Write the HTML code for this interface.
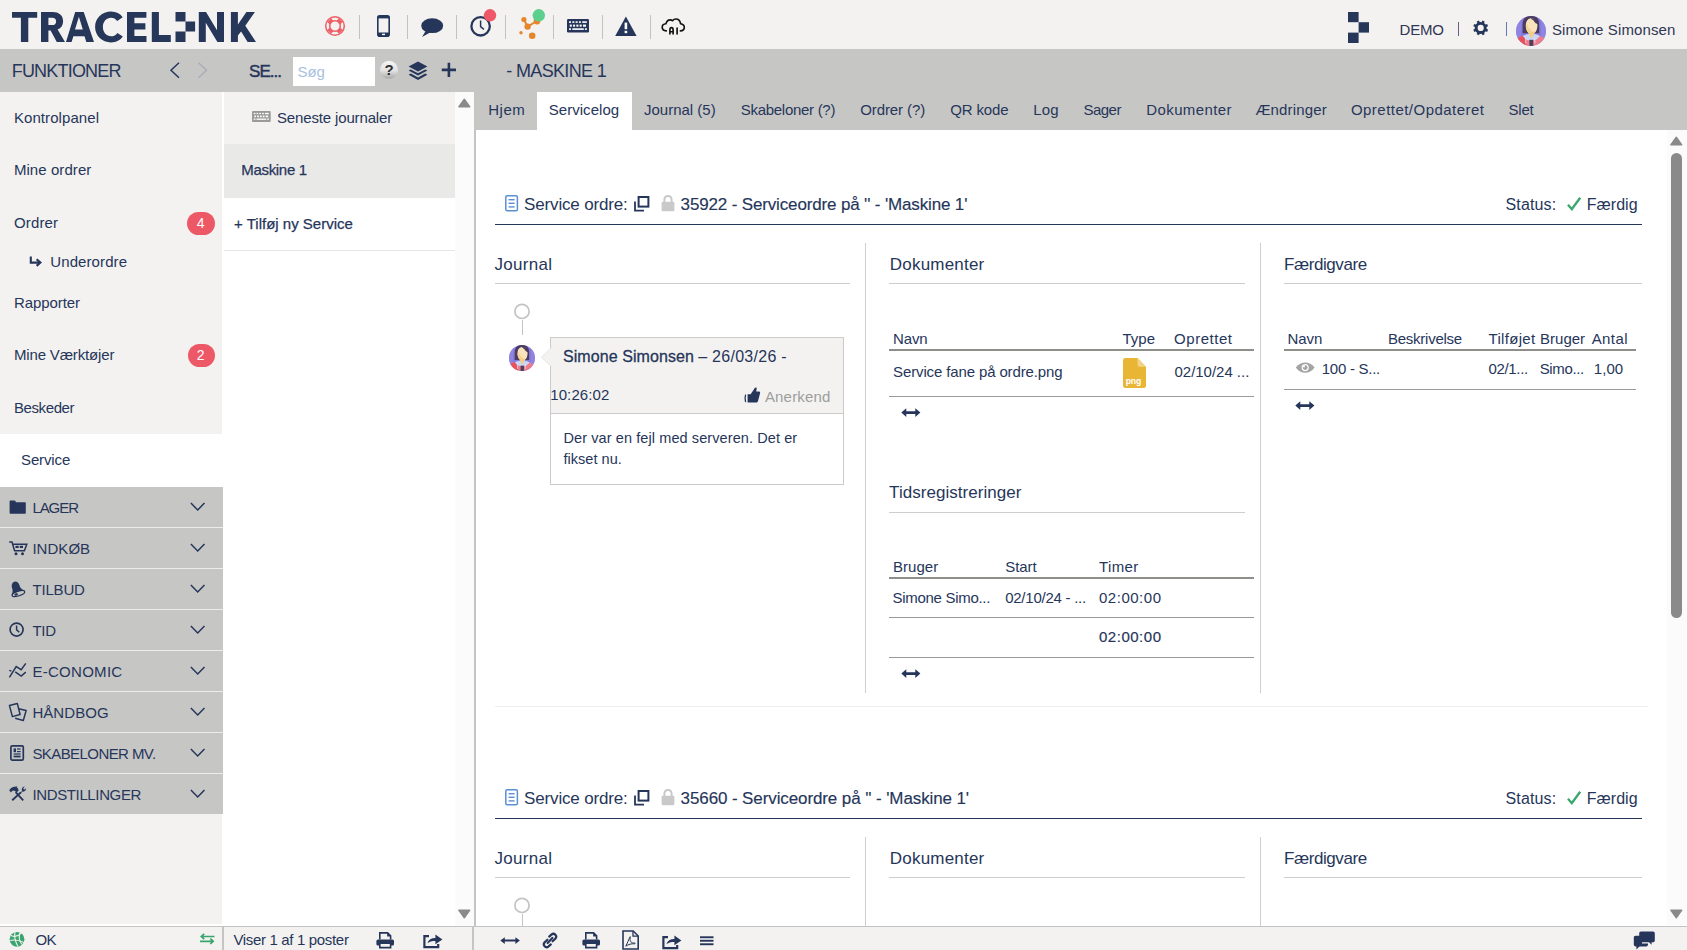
<!DOCTYPE html>
<html><head><meta charset="utf-8"><title>Tracelink - Service</title>
<style>
*{box-sizing:border-box;margin:0;padding:0}
html,body{width:1687px;height:950px;overflow:hidden;background:#fff}
body{font-family:"Liberation Sans",sans-serif;color:#26365a;position:relative}
.a{position:absolute}
.t{position:absolute;white-space:nowrap;font-family:"Liberation Sans",sans-serif;font-size:15px;line-height:15px;color:#26365a}
svg{position:absolute;overflow:visible}
</style></head><body>
<div class="a" style="left:0px;top:0px;width:1687px;height:49px;background:#f3f2f0"></div>
<div class="a" style="left:0px;top:49px;width:1687px;height:43px;background:#c6c6c5"></div>
<div class="a" style="left:0px;top:92px;width:222px;height:832px;background:#f3f2f0"></div>
<div class="a" style="left:0px;top:434px;width:222px;height:53px;background:#fff"></div>
<div class="a" style="left:222px;top:92px;width:2px;height:834px;background:#fff"></div>
<div class="a" style="left:224px;top:92px;width:231px;height:834px;background:#fff"></div>
<div class="a" style="left:224px;top:92px;width:231px;height:52px;background:#f3f2f0"></div>
<div class="a" style="left:224px;top:144px;width:231px;height:54px;background:#e9e9e8"></div>
<div class="a" style="left:224px;top:250px;width:231px;height:1px;background:#e6e6e6"></div>
<div class="a" style="left:455px;top:92px;width:19px;height:834px;background:#fbfbfb"></div>
<div class="a" style="left:474px;top:92px;width:1213px;height:38px;background:#c6c6c5"></div>
<div class="a" style="left:537px;top:92px;width:95px;height:38px;background:#fff"></div>
<div class="a" style="left:474px;top:130px;width:2px;height:796px;background:#c4c4c4"></div>
<div class="a" style="left:1667px;top:130px;width:19px;height:795px;background:#fbfbfb"></div>
<svg style="left:0px;top:0px;" width="260" height="49" viewBox="0 0 260 49"><g fill="#26375a">
<path d="M12 12h25.2v5.7h-8.9V42h-7.4V17.7H12z"/>
<path d="M41 12h11.5c6.7 0 10.6 3.4 10.6 9.2 0 4.1-2 7-5.5 8.4L65 42h-8.2l-6.2-11.4h-2.2V42H41zM48.4 17.7v7.4h3.8c2.5 0 3.9-1.3 3.9-3.7s-1.4-3.7-3.9-3.7z"/>
<path d="M75.2 12h8.5L94 42h-7.7l-1.8-5.8H73.4L71.6 42H66zM75 29.6h7.8l-3.9-12.8z"/>
<path d="M122.8 36.5c-2.5 3.7-6.6 5.9-11.7 5.9-9.1 0-16-6.6-16-15.4s6.9-15.4 16-15.4c5 0 9.1 2.1 11.6 5.6l-5.5 3.8c-1.5-2.1-3.6-3.3-6.1-3.3-4.6 0-8.2 3.8-8.2 9.3s3.6 9.3 8.2 9.3c2.7 0 4.8-1.2 6.3-3.4z"/>
<path d="M127 12h19.4v5.8h-12v5.4h11v6.3h-11v6.6h12.1V42H127z"/>
<path d="M151.8 12h7.1v23.1h11.9V42h-19z"/>
<path d="M175.5 12h10v9.6h9.6v10h-9.6V42h-10v-10.4h10V21.6h-10z"/>
<path d="M198.8 12h7.2l11 18.2V12h7V42h-6.6l-11.6-19.2V42h-7z"/>
<path d="M230.9 12h7v12.4l8.5-12.4h8.5l-9.6 13.7L256 42h-8.4l-6.5-10.4-3.2 3.9V42h-7z"/>
</g></svg>
<div class="a" style="left:359px;top:15px;width:1px;height:24px;background:#c2c2c2"></div>
<div class="a" style="left:407px;top:15px;width:1px;height:24px;background:#c2c2c2"></div>
<div class="a" style="left:456px;top:15px;width:1px;height:24px;background:#c2c2c2"></div>
<div class="a" style="left:505px;top:15px;width:1px;height:24px;background:#c2c2c2"></div>
<div class="a" style="left:553px;top:15px;width:1px;height:24px;background:#c2c2c2"></div>
<div class="a" style="left:602px;top:15px;width:1px;height:24px;background:#c2c2c2"></div>
<div class="a" style="left:650px;top:15px;width:1px;height:24px;background:#c2c2c2"></div>
<svg style="left:324px;top:15px;" width="22" height="22" viewBox="0 0 22 22"><circle cx="11" cy="11" r="9.3" fill="none" stroke="#ee5f67" stroke-width="1.5"/>
<circle cx="11" cy="11" r="5.3" fill="none" stroke="#ee5f67" stroke-width="1.5"/>
<g stroke="#ee5f67" stroke-width="5.2"><path d="M5.2 5.2l2.4 2.4M16.8 5.2l-2.4 2.4M5.2 16.8l2.4-2.4M16.8 16.8l-2.4-2.4"/></g></svg>
<svg style="left:377px;top:15px;" width="13" height="22" viewBox="0 0 13 22"><rect x="0.8" y="0.8" width="11.4" height="20.4" rx="2" fill="none" stroke="#26365a" stroke-width="1.6"/>
<rect x="0.8" y="0.8" width="11.4" height="2.6" fill="#26365a"/><rect x="0.8" y="17.6" width="11.4" height="3.6" rx="1" fill="#26365a"/>
<rect x="5" y="18.7" width="3" height="1.4" fill="#fff"/></svg>
<svg style="left:420px;top:18px;" width="24" height="20" viewBox="0 0 24 20"><ellipse cx="12.2" cy="7.7" rx="11" ry="7.4" fill="#26365a"/><path d="M6 12.5 L2 19 L11 14z" fill="#26365a"/></svg>
<svg style="left:469px;top:15px;" width="23" height="23" viewBox="0 0 23 23"><circle cx="11.6" cy="11.3" r="9.2" fill="none" stroke="#26365a" stroke-width="2.3"/><path d="M11.6 5.6v6.1l3.3 2.7" fill="none" stroke="#26365a" stroke-width="1.5"/></svg>
<svg style="left:483px;top:8px;" width="14" height="14" viewBox="0 0 14 14"><circle cx="7" cy="7.3" r="6.2" fill="#ee5866"/></svg>
<svg style="left:518px;top:8px;" width="28" height="30" viewBox="0 0 28 30"><g fill="#e6862c"><circle cx="5.9" cy="11.5" r="2.6"/><circle cx="9.6" cy="18.6" r="3.2"/><circle cx="3" cy="24.8" r="1.7"/><circle cx="14.2" cy="27.7" r="3.3"/><circle cx="19" cy="13" r="3.4"/></g>
<path d="M5.9 11.5 L9.6 18.6 L19 13" fill="none" stroke="#e6862c" stroke-width="2"/></svg>
<svg style="left:532px;top:8px;" width="14" height="14" viewBox="0 0 14 14"><circle cx="6.8" cy="7.3" r="6.2" fill="#5bcf8e"/></svg>
<svg style="left:567px;top:19px;" width="22" height="14" viewBox="0 0 22 14"><rect x="0" y="0" width="22" height="13.5" rx="1.2" fill="#26365a"/>
<g fill="#fff"><rect x="2" y="2.3" width="2" height="1.6"/><rect x="5.3" y="2.3" width="2" height="1.6"/><rect x="8.6" y="2.3" width="2" height="1.6"/><rect x="11.9" y="2.3" width="2" height="1.6"/><rect x="15.2" y="2.3" width="4.6" height="1.6"/>
<rect x="2.8" y="5.6" width="2" height="2.1"/><rect x="6.1" y="5.6" width="2" height="2.1"/><rect x="9.4" y="5.6" width="2" height="2.1"/><rect x="12.7" y="5.6" width="2" height="2.1"/><rect x="16" y="5.6" width="3" height="2.1"/>
<rect x="2" y="9.3" width="2" height="1.6"/><rect x="5.3" y="9.3" width="11.5" height="1.6"/><rect x="17.9" y="9.3" width="2" height="1.6"/></g></svg>
<svg style="left:615px;top:16px;" width="22" height="20" viewBox="0 0 22 20"><path d="M10.9 0.6 L21.6 19.9 H0.2z" fill="#26365a"/><rect x="9.6" y="6.6" width="2.6" height="6.6" fill="#fff"/><rect x="9.6" y="14.8" width="2.6" height="2.4" fill="#fff"/></svg>
<svg style="left:655px;top:12px;" width="35" height="28" viewBox="0 0 35 28"><g fill="none" stroke="#111" stroke-width="1.65" stroke-linecap="round" stroke-linejoin="round">
<path d="M11.3 18.9 C8.6 18.9 7.2 17 7.2 15.1 C7.2 13.3 8.7 11.9 10.9 11.7 C11.7 9.3 13.2 7.8 15.1 7.8 C16.1 7.8 16.9 8.1 17.5 8.7 C18.4 7.6 19.6 7 20.9 7 C23.2 7 25.1 8.9 25.6 11.7 C27.8 12.1 29.3 13.5 29.3 15.3 C29.3 17.4 27.6 18.9 25.4 18.9"/>
<path d="M14.9 21.9 V17.9 C14.9 16.4 15.6 15.6 16.5 15.6 C17.4 15.6 18.1 16.4 18.1 17.9 V21.9 M14.9 19.7 H18.1"/><path d="M22.1 16 V21.9"/></g></svg>
<svg style="left:1347px;top:11px;" width="23" height="33" viewBox="0 0 23 33"><g fill="#26375a"><rect x="1" y="1" width="10.6" height="10.2"/><rect x="11.6" y="11.2" width="10.4" height="10.4"/><rect x="1" y="21.6" width="10.6" height="10.4"/></g></svg>
<div class="t" style="left:1399.60px;top:22.00px;font-size:15px;line-height:15px;color:#2f3654;letter-spacing:-0.267px;">DEMO</div>
<div class="a" style="left:1458px;top:22px;width:1px;height:14px;background:#6a5f80"></div>
<svg style="left:1470px;top:17px;" width="22" height="22" viewBox="0 0 22 22"><g transform="translate(10.7,10.9)"><circle r="4.55" fill="none" stroke="#26365a" stroke-width="2.9"/>
<g fill="#26365a"><rect x="-1.25" y="-7.5" width="2.5" height="3" transform="rotate(22.5)"/><rect x="-1.25" y="-7.5" width="2.5" height="3" transform="rotate(67.5)"/><rect x="-1.25" y="-7.5" width="2.5" height="3" transform="rotate(112.5)"/><rect x="-1.25" y="-7.5" width="2.5" height="3" transform="rotate(157.5)"/><rect x="-1.25" y="-7.5" width="2.5" height="3" transform="rotate(202.5)"/><rect x="-1.25" y="-7.5" width="2.5" height="3" transform="rotate(247.5)"/><rect x="-1.25" y="-7.5" width="2.5" height="3" transform="rotate(292.5)"/><rect x="-1.25" y="-7.5" width="2.5" height="3" transform="rotate(337.5)"/></g></g></svg>
<div class="a" style="left:1506px;top:22px;width:1px;height:14px;background:#5b7fb5"></div>
<svg style="left:1516px;top:16px;" width="30" height="30" viewBox="0 0 30 30"><defs><clipPath id="avc1"><circle cx="15" cy="15" r="15"/></clipPath></defs>
<g clip-path="url(#avc1)"><rect width="30" height="30" fill="#8479dc"/>
<rect x="0" y="0" width="5" height="30" fill="#978ce4" opacity="0.6"/><rect x="25" y="0" width="5" height="30" fill="#978ce4" opacity="0.6"/>
<path d="M6.6 17.2 V8.4 C6.6 2.6 10 -0.4 15 -0.4 C20 -0.4 23.2 2.6 23.2 8.4 V17.2z" fill="#4a3b5f"/>
<path d="M9.8 9.6 C9.8 4.8 12 2.2 15.6 2.2 C19.2 2.2 21.4 4.8 21.4 9.6 C21.4 14.6 18.8 18.4 15.6 18.4 C12.4 18.4 9.8 14.6 9.8 9.6z" fill="#f8e3bd"/>
<path d="M9.8 9.6 C9.8 14.6 12.4 18.4 15.6 18.4 L15.6 14 C13 13 12 11 11.4 8 z" fill="#f4d394"/>
<path d="M14.5 2.4 C18.6 1.8 22.2 3.6 22.2 8.2 C20.6 8.2 18.6 6.8 17.6 4.6z" fill="#4a3b5f"/>
<rect x="12.6" y="15.6" width="5.6" height="8" fill="#f3cd86"/>
<path d="M0 30 V23.5 C3 20.8 7 19.8 10 19.5 L15.3 23 L20.6 19.5 C23.6 19.8 27 20.8 30 23.5 V30z" fill="#ee7c8a"/>
<path d="M0 30 V23.5 C3 20.8 6 20 8.6 19.7 L10.6 30z" fill="#e9525d"/>
<path d="M6.8 19.9 C8.8 19 10.8 18.2 12.6 18.1 L15.3 22.4 L18.1 18.1 C19.9 18.2 21.9 19 23.9 19.9 C22.3 22.2 20.2 23.9 18.2 24.3 L15.3 24.6 L12.5 24.3 C10.5 23.9 8.4 22.2 6.8 19.9z" fill="#c9d6f6"/>
<path d="M9.7 21.5 V27.4 M18.9 22 V27.4" stroke="#dde5fa" stroke-width="0.8"/>
<rect x="13.4" y="23.8" width="3.8" height="7" fill="#4b3f5e"/></g></svg>
<div class="t" style="left:1551.90px;top:22.00px;font-size:15px;line-height:15px;color:#2f3654;letter-spacing:0.126px;">Simone Simonsen</div>
<div class="t" style="left:11.70px;top:62.00px;font-size:18px;line-height:18px;letter-spacing:-0.800px;">FUNKTIONER</div>
<svg style="left:169px;top:62px;" width="12" height="17" viewBox="0 0 12 17"><path d="M10 0.8 L2 8.3 L10 15.8" fill="none" stroke="#26365a" stroke-width="1.5"/></svg>
<svg style="left:197px;top:62px;" width="12" height="17" viewBox="0 0 12 17"><path d="M1.5 0.8 L9.5 8.3 L1.5 15.8" fill="none" stroke="#a9adb8" stroke-width="1.5"/></svg>
<div class="t" style="left:249.10px;top:63.00px;font-size:17px;line-height:17px;letter-spacing:-0.965px;-webkit-text-stroke:0.45px #26365a;">SE...</div>
<div class="a" style="left:293px;top:57px;width:82px;height:29px;background:#fff"></div>
<div class="t" style="left:297.50px;top:64.00px;font-size:15px;line-height:15px;color:#a8c1df;letter-spacing:-0.108px;">Søg</div>
<svg style="left:379px;top:60px;" width="20" height="20" viewBox="0 0 20 20"><defs><linearGradient id="hg" x1="0" y1="0" x2="0" y2="1"><stop offset="0" stop-color="#f6f6f6"/><stop offset="0.55" stop-color="#e2e2e2"/><stop offset="1" stop-color="#a8a8a8"/></linearGradient></defs>
<circle cx="10" cy="9.8" r="9" fill="url(#hg)"/><text x="10" y="15.2" font-family="Liberation Sans" font-weight="700" font-size="15" text-anchor="middle" fill="#2e2e2e">?</text></svg>
<svg style="left:408px;top:60.6px;" width="20" height="21" viewBox="0 0 20 21"><g fill="#26365a"><path d="M10 0.6 L19.4 5.6 L10 10.6 L0.6 5.6z"/>
<path d="M0.6 9.6 L2.8 8.4 L10 12.3 L17.2 8.4 L19.4 9.6 L10 14.6z"/><path d="M0.6 13.8 L2.8 12.6 L10 16.5 L17.2 12.6 L19.4 13.8 L10 19z"/></g></svg>
<svg style="left:441px;top:62px;" width="16" height="16" viewBox="0 0 16 16"><path d="M7.9 0.8v14.2M0.8 7.9h14.2" stroke="#26365a" stroke-width="2.6"/></svg>
<div class="t" style="left:506.30px;top:62.00px;font-size:18px;line-height:18px;letter-spacing:-0.663px;">- MASKINE 1</div>
<div class="t" style="left:13.90px;top:110.00px;font-size:15px;line-height:15px;letter-spacing:0.079px;">Kontrolpanel</div>
<div class="t" style="left:13.90px;top:162.00px;font-size:15px;line-height:15px;letter-spacing:0.070px;">Mine ordrer</div>
<div class="t" style="left:13.90px;top:215.00px;font-size:15px;line-height:15px;letter-spacing:0.171px;">Ordrer</div>
<div class="a" style="left:187px;top:212px;width:28px;height:23px;background:#ec5865;border-radius:11.5px"></div>
<div class="t" style="left:196.80px;top:216.00px;font-size:14px;line-height:14px;color:#fff;">4</div>
<svg style="left:29px;top:256px;" width="12" height="11" viewBox="0 0 12 11"><path d="M1.8 0.5 V6.6 H10" fill="none" stroke="#26365a" stroke-width="2.1"/><path d="M7.6 3.3 L11.4 6.6 L7.6 9.9" fill="none" stroke="#26365a" stroke-width="2.1"/></svg>
<div class="t" style="left:50.30px;top:254.00px;font-size:15px;line-height:15px;letter-spacing:0.092px;">Underordre</div>
<div class="t" style="left:13.90px;top:295.00px;font-size:15px;line-height:15px;letter-spacing:-0.075px;">Rapporter</div>
<div class="t" style="left:14.00px;top:347.00px;font-size:15px;line-height:15px;letter-spacing:-0.164px;">Mine Værktøjer</div>
<div class="a" style="left:188px;top:344px;width:27px;height:23px;background:#ec5865;border-radius:11.5px"></div>
<div class="t" style="left:196.70px;top:348.00px;font-size:14px;line-height:14px;color:#fff;">2</div>
<div class="t" style="left:14.00px;top:400.00px;font-size:15px;line-height:15px;letter-spacing:-0.411px;">Beskeder</div>
<div class="t" style="left:21.00px;top:452.00px;font-size:15px;line-height:15px;letter-spacing:-0.122px;">Service</div>
<div class="a" style="left:0px;top:487px;width:223px;height:40px;background:#c6c6c5"></div>
<div class="a" style="left:0px;top:527px;width:223px;height:1px;background:#ececeb"></div>
<div class="t" style="left:32.40px;top:500.40px;font-size:15px;line-height:15px;letter-spacing:-1.065px;">LAGER</div>
<svg style="left:190px;top:502px;" width="16" height="10" viewBox="0 0 16 10"><path d="M0.9 1 L7.7 8 L14.5 1" fill="none" stroke="#26365a" stroke-width="1.5"/></svg>
<div class="a" style="left:0px;top:528px;width:223px;height:40px;background:#c6c6c5"></div>
<div class="a" style="left:0px;top:568px;width:223px;height:1px;background:#ececeb"></div>
<div class="t" style="left:32.40px;top:541.40px;font-size:15px;line-height:15px;letter-spacing:0.037px;">INDKØB</div>
<svg style="left:190px;top:543px;" width="16" height="10" viewBox="0 0 16 10"><path d="M0.9 1 L7.7 8 L14.5 1" fill="none" stroke="#26365a" stroke-width="1.5"/></svg>
<div class="a" style="left:0px;top:569px;width:223px;height:40px;background:#c6c6c5"></div>
<div class="a" style="left:0px;top:609px;width:223px;height:1px;background:#ececeb"></div>
<div class="t" style="left:32.40px;top:582.40px;font-size:15px;line-height:15px;letter-spacing:-0.169px;">TILBUD</div>
<svg style="left:190px;top:584px;" width="16" height="10" viewBox="0 0 16 10"><path d="M0.9 1 L7.7 8 L14.5 1" fill="none" stroke="#26365a" stroke-width="1.5"/></svg>
<div class="a" style="left:0px;top:610px;width:223px;height:40px;background:#c6c6c5"></div>
<div class="a" style="left:0px;top:650px;width:223px;height:1px;background:#ececeb"></div>
<div class="t" style="left:32.40px;top:623.40px;font-size:15px;line-height:15px;letter-spacing:-0.286px;">TID</div>
<svg style="left:190px;top:625px;" width="16" height="10" viewBox="0 0 16 10"><path d="M0.9 1 L7.7 8 L14.5 1" fill="none" stroke="#26365a" stroke-width="1.5"/></svg>
<div class="a" style="left:0px;top:651px;width:223px;height:40px;background:#c6c6c5"></div>
<div class="a" style="left:0px;top:691px;width:223px;height:1px;background:#ececeb"></div>
<div class="t" style="left:32.40px;top:664.40px;font-size:15px;line-height:15px;letter-spacing:0.287px;">E-CONOMIC</div>
<svg style="left:190px;top:666px;" width="16" height="10" viewBox="0 0 16 10"><path d="M0.9 1 L7.7 8 L14.5 1" fill="none" stroke="#26365a" stroke-width="1.5"/></svg>
<div class="a" style="left:0px;top:692px;width:223px;height:40px;background:#c6c6c5"></div>
<div class="a" style="left:0px;top:732px;width:223px;height:1px;background:#ececeb"></div>
<div class="t" style="left:32.40px;top:705.40px;font-size:15px;line-height:15px;letter-spacing:0.059px;">HÅNDBOG</div>
<svg style="left:190px;top:707px;" width="16" height="10" viewBox="0 0 16 10"><path d="M0.9 1 L7.7 8 L14.5 1" fill="none" stroke="#26365a" stroke-width="1.5"/></svg>
<div class="a" style="left:0px;top:733px;width:223px;height:40px;background:#c6c6c5"></div>
<div class="a" style="left:0px;top:773px;width:223px;height:1px;background:#ececeb"></div>
<div class="t" style="left:32.40px;top:746.40px;font-size:15px;line-height:15px;letter-spacing:-0.575px;">SKABELONER MV.</div>
<svg style="left:190px;top:748px;" width="16" height="10" viewBox="0 0 16 10"><path d="M0.9 1 L7.7 8 L14.5 1" fill="none" stroke="#26365a" stroke-width="1.5"/></svg>
<div class="a" style="left:0px;top:774px;width:223px;height:40px;background:#c6c6c5"></div>
<div class="t" style="left:32.40px;top:787.40px;font-size:15px;line-height:15px;letter-spacing:-0.363px;">INDSTILLINGER</div>
<svg style="left:190px;top:789px;" width="16" height="10" viewBox="0 0 16 10"><path d="M0.9 1 L7.7 8 L14.5 1" fill="none" stroke="#26365a" stroke-width="1.5"/></svg>
<svg style="left:9px;top:500px;" width="19" height="16" viewBox="0 0 19 16"><path d="M0.6 1.6 C0.6 1 1 0.6 1.6 0.6 H5.8 L7.2 2.2 H15.8 C16.4 2.2 16.8 2.6 16.8 3.2 V12.8 C16.8 13.4 16.4 13.8 15.8 13.8 H1.6 C1 13.8 0.6 13.4 0.6 12.8z" fill="#26365a"/></svg>
<svg style="left:9px;top:541px;" width="19" height="16" viewBox="0 0 19 16"><path d="M0.2 1 H3 L5.6 9.8 H15.4 L17.8 3.3 H4.3" fill="none" stroke="#26365a" stroke-width="1.5"/><rect x="6.5" y="4.8" width="3.2" height="2.2" fill="#26365a"/><rect x="10.8" y="4.8" width="3.2" height="2.2" fill="#26365a"/><circle cx="7" cy="12.7" r="1.5" fill="#26365a"/><circle cx="13.5" cy="12.7" r="1.5" fill="#26365a"/></svg>
<svg style="left:9.5px;top:581px;" width="19" height="16" viewBox="0 0 19 16"><path d="M4.4 0.7 C6.6 0.1 8.6 1.6 9.4 4.1 C10.2 6.7 11 8.3 14.6 9.5 L15 10.9 L2.4 15 L1.6 13.8 C3.1 11 2.7 9 1.9 6.6 C1.1 4 2.2 1.3 4.4 0.7z" fill="#26365a"/><ellipse cx="8.4" cy="12.6" rx="6.6" ry="2.3" transform="rotate(-18 8.4 12.6)" fill="#c6c6c5" stroke="#26365a" stroke-width="1.2"/><ellipse cx="6.2" cy="13.4" rx="1.9" ry="1.1" transform="rotate(-18 6.2 13.4)" fill="#26365a"/></svg>
<svg style="left:9px;top:622px;" width="19" height="16" viewBox="0 0 19 16"><circle cx="7.6" cy="7.6" r="6.5" fill="none" stroke="#26365a" stroke-width="1.7"/><path d="M7.6 3.6 V7.8 L10.3 10.3" fill="none" stroke="#26365a" stroke-width="1.5"/></svg>
<svg style="left:9px;top:663px;" width="19" height="16" viewBox="0 0 19 16"><path d="M0.4 14.4 L7.2 3.6 L12.2 6.7 L16.8 0.4 M6.2 8.8 L12.2 13 L16.8 9.1 M0.3 7.4 L2.4 8.1" fill="none" stroke="#26365a" stroke-width="1.5"/></svg>
<svg style="left:9px;top:703px;" width="19" height="16" viewBox="0 0 19 16"><path d="M9.7 5.8 L17.1 7.6 L14.3 17.5 L6.2 15.3" fill="none" stroke="#26365a" stroke-width="1.5" stroke-linejoin="round"/><path d="M0.4 2.4 L8.3 0.4 L11.1 11.5 L3.4 13.6z" fill="#c6c6c5" stroke="#26365a" stroke-width="1.5" stroke-linejoin="round"/></svg>
<svg style="left:9px;top:744.5px;" width="19" height="16" viewBox="0 0 19 16"><rect x="1.9" y="0.9" width="12.4" height="14.2" rx="1.4" fill="none" stroke="#26365a" stroke-width="1.7"/><g fill="#26365a"><rect x="4.6" y="3.4" width="2.4" height="3.8"/><rect x="8" y="3.4" width="3.6" height="1.2"/><rect x="8" y="6" width="3.6" height="1.2"/><rect x="4.6" y="8.4" width="7" height="1.2"/><rect x="4.6" y="10.6" width="7" height="1.8"/></g></svg>
<svg style="left:9px;top:785px;" width="19" height="16" viewBox="0 0 19 16"><path d="M6.6 7.2 L14.2 15.4 M11.8 7.4 L3.2 15.2" fill="none" stroke="#26365a" stroke-width="1.9"/><path d="M0.2 5.2 C1.5 3 4 1.2 8.4 1.4 L7.8 2.4 C9 3 9.4 4 9.6 5.6 L7.4 7.8 C6.8 6.6 5.8 5.6 4.6 5.6 C3.4 5.6 2.4 6.6 2 7.6z" fill="#26365a"/><path d="M10.8 8.2 L13 6 C12.4 4 13.4 1.6 15.8 1.6 L14.2 3.6 L15.2 4.8 L17.2 3.2 C17.2 5.8 15 7 13.2 6.6 L11.6 9z" fill="#26365a"/></svg>
<svg style="left:252px;top:111px;" width="19" height="11" viewBox="0 0 19 11"><g transform="scale(0.85,0.81)"><rect x="0" y="0" width="22" height="13.5" rx="1.2" fill="#9a9a98"/>
<g fill="#fff"><rect x="2" y="2.3" width="2" height="1.6"/><rect x="5.3" y="2.3" width="2" height="1.6"/><rect x="8.6" y="2.3" width="2" height="1.6"/><rect x="11.9" y="2.3" width="2" height="1.6"/><rect x="15.2" y="2.3" width="4.6" height="1.6"/>
<rect x="2.8" y="5.6" width="2" height="2.1"/><rect x="6.1" y="5.6" width="2" height="2.1"/><rect x="9.4" y="5.6" width="2" height="2.1"/><rect x="12.7" y="5.6" width="2" height="2.1"/><rect x="16" y="5.6" width="3" height="2.1"/>
<rect x="2" y="9.3" width="2" height="1.6"/><rect x="5.3" y="9.3" width="11.5" height="1.6"/><rect x="17.9" y="9.3" width="2" height="1.6"/></g></g></svg>
<div class="t" style="left:277.00px;top:110.00px;font-size:15px;line-height:15px;letter-spacing:-0.149px;">Seneste journaler</div>
<div class="t" style="left:241.20px;top:162.00px;font-size:15px;line-height:15px;letter-spacing:-0.297px;-webkit-text-stroke:0.25px #26365a;">Maskine 1</div>
<div class="t" style="left:234.10px;top:216.00px;font-size:15px;line-height:15px;-webkit-text-stroke:0.25px #26365a;">+ Tilføj ny Service</div>
<svg style="left:458px;top:98px;" width="13" height="10" viewBox="0 0 13 10"><path d="M6.3 1.2 L11.8 8.8 H0.8z" fill="#8a8a8a" stroke="#8a8a8a" stroke-width="1.4" stroke-linejoin="round"/></svg>
<svg style="left:458px;top:909px;" width="13" height="10" viewBox="0 0 13 10"><path d="M6.3 8.8 L11.8 1.2 H0.8z" fill="#8a8a8a" stroke="#8a8a8a" stroke-width="1.4" stroke-linejoin="round"/></svg>
<div class="t" style="left:488.20px;top:102.00px;font-size:15px;line-height:15px;letter-spacing:0.528px;">Hjem</div>
<div class="t" style="left:548.70px;top:102.00px;font-size:15px;line-height:15px;letter-spacing:0.050px;">Servicelog</div>
<div class="t" style="left:644.00px;top:102.00px;font-size:15px;line-height:15px;">Journal (5)</div>
<div class="t" style="left:740.80px;top:102.00px;font-size:15px;line-height:15px;letter-spacing:-0.292px;">Skabeloner (?)</div>
<div class="t" style="left:860.20px;top:102.00px;font-size:15px;line-height:15px;letter-spacing:-0.094px;">Ordrer (?)</div>
<div class="t" style="left:950.20px;top:102.00px;font-size:15px;line-height:15px;letter-spacing:-0.151px;">QR kode</div>
<div class="t" style="left:1033.20px;top:102.00px;font-size:15px;line-height:15px;letter-spacing:0.184px;">Log</div>
<div class="t" style="left:1083.60px;top:102.00px;font-size:15px;line-height:15px;letter-spacing:-0.558px;">Sager</div>
<div class="t" style="left:1146.30px;top:102.00px;font-size:15px;line-height:15px;letter-spacing:0.389px;">Dokumenter</div>
<div class="t" style="left:1255.40px;top:102.00px;font-size:15px;line-height:15px;letter-spacing:0.169px;">Ændringer</div>
<div class="t" style="left:1350.90px;top:102.00px;font-size:15px;line-height:15px;letter-spacing:0.472px;">Oprettet/Opdateret</div>
<div class="t" style="left:1508.40px;top:102.00px;font-size:15px;line-height:15px;letter-spacing:-0.153px;">Slet</div>
<svg style="left:1670px;top:136px;" width="13" height="10" viewBox="0 0 13 10"><path d="M6.3 1.2 L11.8 8.8 H0.8z" fill="#8a8a8a" stroke="#8a8a8a" stroke-width="1.4" stroke-linejoin="round"/></svg>
<svg style="left:1670px;top:909px;" width="13" height="10" viewBox="0 0 13 10"><path d="M6.3 8.8 L11.8 1.2 H0.8z" fill="#8a8a8a" stroke="#8a8a8a" stroke-width="1.4" stroke-linejoin="round"/></svg>
<div class="a" style="left:1671px;top:153px;width:11px;height:465px;background:#8a8a8a;border-radius:5.5px"></div>
<svg style="left:505px;top:195px;" width="14" height="17" viewBox="0 0 14 17"><rect x="0.8" y="0.8" width="11.6" height="15" rx="1.4" fill="none" stroke="#5b8fd2" stroke-width="1.5"/><g fill="#5b8fd2"><rect x="3.6" y="4" width="6" height="1.4"/><rect x="3.6" y="7.6" width="6" height="1.4"/><rect x="3.6" y="11.2" width="6" height="1.4"/></g></svg>
<div class="t" style="left:524.10px;top:196.00px;font-size:17px;line-height:17px;letter-spacing:-0.164px;">Service ordre:</div>
<svg style="left:634px;top:196px;top:196px" width="16" height="16" viewBox="0 0 16 16"><path d="M1 5.6 V14.6 H10" fill="none" stroke="#26365a" stroke-width="1.8"/><rect x="4.6" y="1" width="9.8" height="9.6" fill="none" stroke="#26365a" stroke-width="2"/></svg>
<svg style="left:661px;top:195px;" width="14" height="17" viewBox="0 0 14 17"><path d="M3.4 7 V4.8 C3.4 2.2 5 0.9 7 0.9 C9 0.9 10.6 2.2 10.6 4.8 V7" fill="none" stroke="#c9c9c9" stroke-width="2"/><rect x="0.6" y="6.8" width="12.8" height="9.4" rx="1.2" fill="#c9c9c9"/></svg>
<div class="t" style="left:680.60px;top:196.00px;font-size:17px;line-height:17px;letter-spacing:-0.151px;-webkit-text-stroke:0.15px #26365a;">35922 - Serviceordre på &#x27;&#x27; - &#x27;Maskine 1&#x27;</div>
<div class="t" style="left:1505.50px;top:197.00px;font-size:16px;line-height:16px;letter-spacing:0.148px;">Status:</div>
<svg style="left:1567px;top:197px;" width="15" height="14" viewBox="0 0 15 14"><path d="M1 7.8 L4.8 12.2 L13.2 0.8" fill="none" stroke="#3aa76d" stroke-width="2.4"/></svg>
<div class="t" style="left:1586.70px;top:197.00px;font-size:16px;line-height:16px;letter-spacing:0.042px;">Færdig</div>
<div class="a" style="left:495px;top:224px;width:1147px;height:1px;background:#26375a"></div>
<div class="a" style="left:865px;top:243px;width:1px;height:450px;background:#cfcfcf"></div>
<div class="a" style="left:1260px;top:243px;width:1px;height:450px;background:#cfcfcf"></div>
<div class="t" style="left:494.50px;top:256.00px;font-size:17px;line-height:17px;letter-spacing:0.289px;">Journal</div>
<div class="a" style="left:495px;top:283px;width:355px;height:1px;background:#cdcdcd"></div>
<div class="t" style="left:889.80px;top:256.00px;font-size:17px;line-height:17px;letter-spacing:0.210px;">Dokumenter</div>
<div class="a" style="left:889px;top:283px;width:356px;height:1px;background:#cdcdcd"></div>
<div class="t" style="left:1284.10px;top:256.00px;font-size:17px;line-height:17px;letter-spacing:-0.436px;">Færdigvare</div>
<div class="a" style="left:1284px;top:283px;width:358px;height:1px;background:#cdcdcd"></div>
<svg style="left:513px;top:302px;" width="18" height="18" viewBox="0 0 18 18"><circle cx="9" cy="9.4" r="7.1" fill="#fff" stroke="#c4c4c4" stroke-width="1.7"/></svg>
<div class="a" style="left:522px;top:320px;width:1px;height:15px;background:#c4c4c4"></div>
<svg style="left:509px;top:345px;" width="26" height="26" viewBox="0 0 30 30"><defs><clipPath id="avc2"><circle cx="15" cy="15" r="15"/></clipPath></defs>
<g clip-path="url(#avc2)"><rect width="30" height="30" fill="#8479dc"/>
<rect x="0" y="0" width="5" height="30" fill="#978ce4" opacity="0.6"/><rect x="25" y="0" width="5" height="30" fill="#978ce4" opacity="0.6"/>
<path d="M6.6 17.2 V8.4 C6.6 2.6 10 -0.4 15 -0.4 C20 -0.4 23.2 2.6 23.2 8.4 V17.2z" fill="#4a3b5f"/>
<path d="M9.8 9.6 C9.8 4.8 12 2.2 15.6 2.2 C19.2 2.2 21.4 4.8 21.4 9.6 C21.4 14.6 18.8 18.4 15.6 18.4 C12.4 18.4 9.8 14.6 9.8 9.6z" fill="#f8e3bd"/>
<path d="M9.8 9.6 C9.8 14.6 12.4 18.4 15.6 18.4 L15.6 14 C13 13 12 11 11.4 8 z" fill="#f4d394"/>
<path d="M14.5 2.4 C18.6 1.8 22.2 3.6 22.2 8.2 C20.6 8.2 18.6 6.8 17.6 4.6z" fill="#4a3b5f"/>
<rect x="12.6" y="15.6" width="5.6" height="8" fill="#f3cd86"/>
<path d="M0 30 V23.5 C3 20.8 7 19.8 10 19.5 L15.3 23 L20.6 19.5 C23.6 19.8 27 20.8 30 23.5 V30z" fill="#ee7c8a"/>
<path d="M0 30 V23.5 C3 20.8 6 20 8.6 19.7 L10.6 30z" fill="#e9525d"/>
<path d="M6.8 19.9 C8.8 19 10.8 18.2 12.6 18.1 L15.3 22.4 L18.1 18.1 C19.9 18.2 21.9 19 23.9 19.9 C22.3 22.2 20.2 23.9 18.2 24.3 L15.3 24.6 L12.5 24.3 C10.5 23.9 8.4 22.2 6.8 19.9z" fill="#c9d6f6"/>
<path d="M9.7 21.5 V27.4 M18.9 22 V27.4" stroke="#dde5fa" stroke-width="0.8"/>
<rect x="13.4" y="23.8" width="3.8" height="7" fill="#4b3f5e"/></g></svg>
<div class="a" style="left:550px;top:337px;width:294px;height:148px;background:#fff;border:1px solid #cacaca"></div>
<div class="a" style="left:551px;top:338px;width:292px;height:76px;background:#f3f2f0;border-bottom:1px solid #cacaca"></div>
<svg style="left:540px;top:347px;" width="12" height="21" viewBox="0 0 12 21"><path d="M11.5 0.5 L1.2 10.2 L11.5 19.8z" fill="#f3f2f0"/><path d="M11.5 0.5 L1.2 10.2 L11.5 19.8" fill="none" stroke="#e2e2e0" stroke-width="0.8"/></svg>
<div class="t" style="left:562.90px;top:349.00px;font-size:16px;line-height:16px;letter-spacing:0.083px;-webkit-text-stroke:0.3px #26365a;">Simone Simonsen</div>
<div class="t" style="left:698.20px;top:349.00px;font-size:16px;line-height:16px;letter-spacing:0.281px;">– 26/03/26 -</div>
<div class="t" style="left:550.20px;top:387.00px;font-size:15px;line-height:15px;letter-spacing:0.116px;">10:26:02</div>
<svg style="left:744px;top:386px;" width="17" height="18" viewBox="0 0 17 18"><path d="M1.6 8.6 C0.9 10.5 0.9 13 1.6 16.2" fill="none" stroke="#26365a" stroke-width="1.3"/><path d="M3.6 8.2 H6.6 L10 3.2 C10.6 1.9 11.4 1 12.3 1.6 C13 2.2 12.6 3.6 12.2 5.5 H15.2 C16 5.6 16.4 6.6 16 7.4 L14 15 C13.7 16 13 16.6 12 16.6 H3.6z" fill="#26365a"/></svg>
<div class="t" style="left:764.90px;top:389.00px;font-size:15px;line-height:15px;color:#9d9d9d;letter-spacing:0.183px;">Anerkend</div>
<div class="t" style="left:563.50px;top:431.00px;font-size:14.5px;line-height:14.5px;letter-spacing:0.092px;">Der var en fejl med serveren. Det er</div>
<div class="t" style="left:563.50px;top:452.00px;font-size:14.5px;line-height:14.5px;letter-spacing:0.030px;">fikset nu.</div>
<div class="t" style="left:893.10px;top:331.00px;font-size:15px;line-height:15px;letter-spacing:-0.144px;">Navn</div>
<div class="t" style="left:1122.40px;top:331.00px;font-size:15px;line-height:15px;letter-spacing:0.056px;">Type</div>
<div class="t" style="left:1174.10px;top:331.00px;font-size:15px;line-height:15px;letter-spacing:0.528px;">Oprettet</div>
<div class="a" style="left:889px;top:349px;width:365px;height:2px;background:#8e8e8b"></div>
<div class="t" style="left:893.10px;top:364.00px;font-size:15px;line-height:15px;letter-spacing:-0.130px;">Service fane på ordre.png</div>
<svg style="left:1123px;top:358px;" width="24" height="31" viewBox="0 0 24 31"><path d="M2.2 0 H14.5 L23 8.8 V27.5 C23 29 22.2 30 20.8 30 H2.2 C0.9 30 0 29 0 27.5 V2.5 C0 1 0.9 0 2.2 0z" fill="#e9b535"/><path d="M14.5 0 L23 8.8 H16.6 C15.4 8.8 14.5 7.9 14.5 6.7z" fill="#f2d385"/><text x="10.5" y="25.8" font-family="Liberation Sans" font-weight="700" font-size="8.6" text-anchor="middle" fill="#fff">png</text></svg>
<div class="t" style="left:1174.50px;top:364.00px;font-size:15px;line-height:15px;letter-spacing:-0.024px;">02/10/24 ...</div>
<div class="a" style="left:889px;top:396px;width:365px;height:1px;background:#9a9a9a"></div>
<svg style="left:901px;top:408px;" width="20" height="10" viewBox="0 0 20 10"><path d="M0.3 4.6 L5.3 0.3 V3.2 H14.3 V0.3 L19.4 4.6 L14.3 8.9 V6 H5.3 V8.9z" fill="#26365a"/></svg>
<div class="t" style="left:889.10px;top:484.00px;font-size:17px;line-height:17px;letter-spacing:0.039px;">Tidsregistreringer</div>
<div class="a" style="left:889px;top:512px;width:356px;height:1px;background:#cdcdcd"></div>
<div class="t" style="left:892.90px;top:559.00px;font-size:15px;line-height:15px;letter-spacing:0.054px;">Bruger</div>
<div class="t" style="left:1005.20px;top:559.00px;font-size:15px;line-height:15px;letter-spacing:-0.047px;">Start</div>
<div class="t" style="left:1099.00px;top:559.00px;font-size:15px;line-height:15px;letter-spacing:0.380px;">Timer</div>
<div class="a" style="left:889px;top:577px;width:365px;height:2px;background:#8e8e8b"></div>
<div class="t" style="left:892.60px;top:590.00px;font-size:15px;line-height:15px;letter-spacing:-0.301px;">Simone Simo...</div>
<div class="t" style="left:1005.20px;top:590.00px;font-size:15px;line-height:15px;letter-spacing:-0.249px;">02/10/24 - ...</div>
<div class="t" style="left:1099.00px;top:590.00px;font-size:15px;line-height:15px;letter-spacing:0.516px;">02:00:00</div>
<div class="a" style="left:889px;top:617px;width:365px;height:1px;background:#9a9a9a"></div>
<div class="t" style="left:1099.00px;top:629.00px;font-size:15px;line-height:15px;letter-spacing:0.516px;-webkit-text-stroke:0.2px #26365a;">02:00:00</div>
<div class="a" style="left:889px;top:657px;width:365px;height:1px;background:#9a9a9a"></div>
<svg style="left:901px;top:669px;" width="20" height="10" viewBox="0 0 20 10"><path d="M0.3 4.6 L5.3 0.3 V3.2 H14.3 V0.3 L19.4 4.6 L14.3 8.9 V6 H5.3 V8.9z" fill="#26365a"/></svg>
<div class="t" style="left:1287.60px;top:331.00px;font-size:15px;line-height:15px;letter-spacing:-0.110px;">Navn</div>
<div class="t" style="left:1388.00px;top:331.00px;font-size:15px;line-height:15px;letter-spacing:-0.250px;">Beskrivelse</div>
<div class="t" style="left:1488.50px;top:331.00px;font-size:15px;line-height:15px;letter-spacing:0.321px;">Tilføjet</div>
<div class="t" style="left:1540.10px;top:331.00px;font-size:15px;line-height:15px;">Bruger</div>
<div class="t" style="left:1591.70px;top:331.00px;font-size:15px;line-height:15px;letter-spacing:0.399px;">Antal</div>
<div class="a" style="left:1284px;top:349px;width:352px;height:2px;background:#8e8e8b"></div>
<svg style="left:1295px;top:362px;" width="21" height="12" viewBox="0 0 21 12"><path d="M0.8 5.6 C3.5 1.8 6.8 0.4 10.2 0.4 C13.6 0.4 16.9 1.8 19.6 5.6 C16.9 9.4 13.6 10.8 10.2 10.8 C6.8 10.8 3.5 9.4 0.8 5.6z" fill="#a3a3a3"/><circle cx="10.2" cy="5.6" r="3.6" fill="#fff"/><circle cx="10.2" cy="5.6" r="2.4" fill="#a3a3a3"/><circle cx="9" cy="4.6" r="1" fill="#fff"/></svg>
<div class="t" style="left:1321.80px;top:361.00px;font-size:15px;line-height:15px;letter-spacing:-0.275px;">100 - S...</div>
<div class="t" style="left:1488.50px;top:361.00px;font-size:15px;line-height:15px;letter-spacing:-0.334px;">02/1...</div>
<div class="t" style="left:1539.70px;top:361.00px;font-size:15px;line-height:15px;letter-spacing:-0.365px;">Simo...</div>
<div class="t" style="left:1593.70px;top:361.00px;font-size:15px;line-height:15px;letter-spacing:0.099px;">1,00</div>
<div class="a" style="left:1284px;top:389px;width:352px;height:1px;background:#9a9a9a"></div>
<svg style="left:1295px;top:401px;" width="20" height="10" viewBox="0 0 20 10"><path d="M0.3 4.6 L5.3 0.3 V3.2 H14.3 V0.3 L19.4 4.6 L14.3 8.9 V6 H5.3 V8.9z" fill="#26365a"/></svg>
<div class="a" style="left:495px;top:706px;width:1153px;height:1px;background:#efeeec"></div>
<svg style="left:505px;top:788.5px;" width="14" height="17" viewBox="0 0 14 17"><rect x="0.8" y="0.8" width="11.6" height="15" rx="1.4" fill="none" stroke="#5b8fd2" stroke-width="1.5"/><g fill="#5b8fd2"><rect x="3.6" y="4" width="6" height="1.4"/><rect x="3.6" y="7.6" width="6" height="1.4"/><rect x="3.6" y="11.2" width="6" height="1.4"/></g></svg>
<div class="t" style="left:524.10px;top:789.50px;font-size:17px;line-height:17px;letter-spacing:-0.164px;">Service ordre:</div>
<svg style="left:634px;top:196px;top:789.5px" width="16" height="16" viewBox="0 0 16 16"><path d="M1 5.6 V14.6 H10" fill="none" stroke="#26365a" stroke-width="1.8"/><rect x="4.6" y="1" width="9.8" height="9.6" fill="none" stroke="#26365a" stroke-width="2"/></svg>
<svg style="left:661px;top:788.5px;" width="14" height="17" viewBox="0 0 14 17"><path d="M3.4 7 V4.8 C3.4 2.2 5 0.9 7 0.9 C9 0.9 10.6 2.2 10.6 4.8 V7" fill="none" stroke="#c9c9c9" stroke-width="2"/><rect x="0.6" y="6.8" width="12.8" height="9.4" rx="1.2" fill="#c9c9c9"/></svg>
<div class="t" style="left:680.60px;top:789.50px;font-size:17px;line-height:17px;letter-spacing:-0.107px;-webkit-text-stroke:0.15px #26365a;">35660 - Serviceordre på &#x27;&#x27; - &#x27;Maskine 1&#x27;</div>
<div class="t" style="left:1505.50px;top:790.50px;font-size:16px;line-height:16px;letter-spacing:0.148px;">Status:</div>
<svg style="left:1567px;top:790.5px;" width="15" height="14" viewBox="0 0 15 14"><path d="M1 7.8 L4.8 12.2 L13.2 0.8" fill="none" stroke="#3aa76d" stroke-width="2.4"/></svg>
<div class="t" style="left:1586.70px;top:790.50px;font-size:16px;line-height:16px;letter-spacing:0.042px;">Færdig</div>
<div class="a" style="left:495px;top:817.5px;width:1147px;height:1px;background:#26375a"></div>
<div class="a" style="left:865px;top:836.5px;width:1px;height:450px;background:#cfcfcf"></div>
<div class="a" style="left:1260px;top:836.5px;width:1px;height:450px;background:#cfcfcf"></div>
<div class="t" style="left:494.50px;top:849.50px;font-size:17px;line-height:17px;letter-spacing:0.289px;">Journal</div>
<div class="a" style="left:495px;top:876.5px;width:355px;height:1px;background:#cdcdcd"></div>
<div class="t" style="left:889.80px;top:849.50px;font-size:17px;line-height:17px;letter-spacing:0.210px;">Dokumenter</div>
<div class="a" style="left:889px;top:876.5px;width:356px;height:1px;background:#cdcdcd"></div>
<div class="t" style="left:1284.10px;top:849.50px;font-size:17px;line-height:17px;letter-spacing:-0.436px;">Færdigvare</div>
<div class="a" style="left:1284px;top:876.5px;width:358px;height:1px;background:#cdcdcd"></div>
<svg style="left:513px;top:895.5px;" width="18" height="18" viewBox="0 0 18 18"><circle cx="9" cy="9.4" r="7.1" fill="#fff" stroke="#c4c4c4" stroke-width="1.7"/></svg>
<div class="a" style="left:522px;top:913.5px;width:1px;height:15px;background:#c4c4c4"></div>
<div class="a" style="left:0px;top:926px;width:1687px;height:24px;background:#f3f2f0;border-top:1px solid #c4c4c4"></div>
<div class="a" style="left:222px;top:927px;width:2px;height:23px;background:#c4c4c4"></div>
<div class="a" style="left:472px;top:927px;width:2px;height:23px;background:#c4c4c4"></div>
<svg style="left:9px;top:931px;" width="17" height="17" viewBox="0 0 17 17"><circle cx="8" cy="8.3" r="7.4" fill="#3aa56c"/><g fill="none" stroke="#f3f2f0" stroke-width="1.1"><path d="M2 4.5 C5 6 9 5.5 12.5 2.2"/><path d="M1.2 9.5 C5 8.5 10 9 14.8 11.5"/><path d="M6 1 C5 5 6 10 9 15.6"/><path d="M11 1.5 C9.5 6 11 11 13 13.5"/></g></svg>
<div class="t" style="left:35.50px;top:932.00px;font-size:15px;line-height:15px;letter-spacing:-0.788px;">OK</div>
<svg style="left:199px;top:933px;" width="17" height="12" viewBox="0 0 17 12"><g fill="none" stroke="#3aa56c" stroke-width="1.7"><path d="M15.5 3.5 H2.5 M5.2 0.8 L2.3 3.5 L5.2 6.2"/><path d="M1 8.3 H14 M11.3 5.6 L14.2 8.3 L11.3 11"/></g></svg>
<div class="t" style="left:233.40px;top:932.00px;font-size:15px;line-height:15px;letter-spacing:-0.332px;">Viser 1 af 1 poster</div>
<svg style="left:375.5px;top:932px;" width="19" height="17" viewBox="0 0 19 17"><path d="M3.8 7.6 V0.9 H11.6 L14.6 3.9 V7.6" fill="#f3f2f0" stroke="#26365a" stroke-width="1.6"/><path d="M11.2 0.9 H12 L14.6 3.5 V4.6 H11.2z" fill="#26365a"/><rect x="0.4" y="7.4" width="17.6" height="6.2" rx="1.6" fill="#26365a"/><path d="M3.8 12 V15.6 H14.6 V12" fill="#f3f2f0" stroke="#26365a" stroke-width="1.6"/></svg>
<svg style="left:422.5px;top:934px;" width="20" height="15" viewBox="0 0 20 15"><path d="M6 2.2 H1.4 V13.2 H15.2 V10" fill="none" stroke="#26365a" stroke-width="2.2"/><path d="M4.4 9.2 C5.4 5.8 8.2 4 12.4 4 V0.6 L19.4 5.4 L12.4 10.2 V7 C9 7 6.6 7.6 4.4 9.2z" fill="#26365a"/></svg>
<svg style="left:500px;top:937px;" width="21" height="8" viewBox="0 0 21 8"><path d="M0.3 3.6 L4.8 0.2 V2.6 H15.4 V0.2 L19.9 3.6 L15.4 7 V4.6 H4.8 V7z" fill="#26365a"/></svg>
<svg style="left:542px;top:933px;" width="17" height="15" viewBox="0 0 17 15"><g fill="none" stroke="#26365a" stroke-width="2.2" stroke-linecap="round"><path d="M7.2 3.6 L9.4 1.6 C10.6 0.6 12.4 0.7 13.4 1.8 C14.4 2.9 14.4 4.6 13.3 5.7 L10.6 8.3"/><path d="M8.8 11.4 L6.6 13.4 C5.4 14.4 3.6 14.3 2.6 13.2 C1.6 12.1 1.6 10.4 2.7 9.3 L5.4 6.7"/><path d="M5.6 10 L10.4 5"/></g></svg>
<svg style="left:581.5px;top:932px;" width="19" height="17" viewBox="0 0 19 17"><path d="M3.8 7.6 V0.9 H11.6 L14.6 3.9 V7.6" fill="#f3f2f0" stroke="#26365a" stroke-width="1.6"/><path d="M11.2 0.9 H12 L14.6 3.5 V4.6 H11.2z" fill="#26365a"/><rect x="0.4" y="7.4" width="17.6" height="6.2" rx="1.6" fill="#26365a"/><path d="M3.8 12 V15.6 H14.6 V12" fill="#f3f2f0" stroke="#26365a" stroke-width="1.6"/></svg>
<svg style="left:622px;top:930px;" width="18" height="20" viewBox="0 0 18 20"><path d="M1 1 H11.2 L16.2 6 V19 H1z" fill="none" stroke="#26365a" stroke-width="1.6"/><path d="M11 1 V6.2 H16.2" fill="none" stroke="#26365a" stroke-width="1.3"/><path d="M3.8 16.2 C5 13.5 6.8 10 7.8 7.2 C8.2 6 8.8 7 8.2 8.5 C7.4 11 9.5 13.4 12.6 13 C13.6 13 13.4 13.8 12.4 13.8 C9.5 13.6 6.5 14.2 3.8 16.2z" fill="none" stroke="#26365a" stroke-width="1"/></svg>
<svg style="left:661.5px;top:934.5px;" width="20" height="15" viewBox="0 0 20 15"><path d="M6 2.2 H1.4 V13.2 H15.2 V10" fill="none" stroke="#26365a" stroke-width="2.2"/><path d="M4.4 9.2 C5.4 5.8 8.2 4 12.4 4 V0.6 L19.4 5.4 L12.4 10.2 V7 C9 7 6.6 7.6 4.4 9.2z" fill="#26365a"/></svg>
<svg style="left:700px;top:936px;" width="14" height="10" viewBox="0 0 14 10"><g fill="#26365a"><rect x="0" y="0.3" width="13.5" height="1.9"/><rect x="0" y="3.8" width="13.5" height="1.9"/><rect x="0" y="7.3" width="13.5" height="1.9"/></g></svg>
<svg style="left:1633px;top:931px;" width="23" height="19" viewBox="0 0 23 19"><path d="M3 4.8 H9 V12.5 H15 V13.6 C15 14.6 14.3 15.4 13.3 15.4 H6.5 L3.4 18.4 V15.4 H2.6 C1.6 15.4 0.8 14.6 0.8 13.6 V6.6 C0.8 5.6 1.6 4.8 2.6 4.8z" fill="#26365a"/><path d="M8 0.6 H20 C21.1 0.6 21.8 1.4 21.8 2.4 V9.4 C21.8 10.4 21.1 11.2 20 11.2 H18.6 V13.8 L16 11.2 H8 C7 11.2 6.2 10.4 6.2 9.4 V2.4 C6.2 1.4 7 0.6 8 0.6z" fill="#26365a"/></svg>
</body></html>
